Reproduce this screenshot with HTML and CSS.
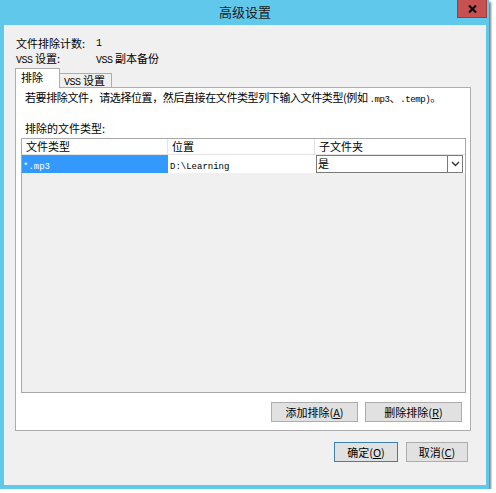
FILE: index.html
```html
<!DOCTYPE html>
<html lang="zh-CN">
<head>
<meta charset="utf-8">
<title>高级设置</title>
<link rel="stylesheet" href="styles.css">
</head>
<body>
<div class="window">
  <div class="titlebar">
    <span class="title">高级设置</span>
    <div class="close">
      <svg width="9" height="8" viewBox="0 0 9 8"><path d="M1 0.5 L8 7.5 M8 0.5 L1 7.5" stroke="#111" stroke-width="2.2" fill="none"/></svg>
    </div>
  </div>
  <div class="client">
    <div class="info">
      <div class="info-row"><span class="label">文件排除计数:</span><span class="mono lg">1</span></div>
      <div class="info-row"><span class="label"><span class="mono lg">VSS</span> 设置:</span><span><span class="mono lg">VSS</span> 副本备份</span></div>
    </div>
    <div class="tabs">
      <div class="tab active">排除</div>
      <div class="tab"><span class="mono lg">VSS</span> 设置</div>
    </div>
    <div class="panel">
      <p class="desc">若要排除文件，请选择位置，然后直接在文件类型列下输入文件类型(例如 <span class="mono">.mp3</span>、<span class="mono">.temp)</span>。</p>
      <p class="list-label">排除的文件类型:</p>
      <div class="grid">
        <div class="grid-head">
          <div class="hcell c1">文件类型</div>
          <div class="hcell c2">位置</div>
          <div class="hcell c3">子文件夹</div>
        </div>
        <div class="grid-row">
          <div class="cell c1 selected"><span class="mono">*.mp3</span></div>
          <div class="cell c2"><span class="mono">D:\Learning</span></div>
          <div class="cell c3">
            <div class="combo">
              <span class="combo-text">是</span>
              <span class="combo-arrow">
                <svg width="9" height="6" viewBox="0 0 9 6"><path d="M1 1 L4.5 4.5 L8 1" stroke="#333" stroke-width="1.4" fill="none"/></svg>
              </span>
            </div>
          </div>
        </div>
      </div>
      <div class="panel-buttons">
        <div class="btn w-add">添加排除(<u>A</u>)</div>
        <div class="btn w-del">删除排除(<u>R</u>)</div>
      </div>
    </div>
    <div class="dialog-buttons">
      <div class="btn default w-ok">确定(<u>O</u>)</div>
      <div class="btn w-cancel">取消(<u>C</u>)</div>
    </div>
  </div>
</div>
</body>
</html>
```
FILE: styles.css
```css
* { box-sizing: border-box; }
body {
  margin: 0;
  background: #ffffff;
  font-family: "Noto Sans CJK SC", "Noto Sans", sans-serif;
  font-size: 11px;
  color: #000;
}
p { margin: 0; }
.mono { font-family: "Liberation Mono", "DejaVu Sans Mono", monospace; font-size: 9px; }
.mono.lg { font-size: 10px; letter-spacing: -0.5px; }
.window {
  width: 489px;
  height: 489px;
  background: #60c8eb;
  padding: 0 3px 4px 4px;
  box-shadow: 2px 2px 2px rgba(0,0,0,0.5);
}
.titlebar {
  position: relative;
  height: 25px;
  display: flex;
  align-items: center;
  justify-content: center;
}
.title {
  font-size: 13px;
  color: #1a1a1a;
  line-height: 16px;
  margin-top: -1px;
}
.close {
  position: absolute;
  top: 0;
  right: -1px;
  width: 30px;
  height: 18px;
  background: #c75050;
  border: 1px solid #9c3c3c;
  border-top: none;
  display: flex;
  align-items: center;
  justify-content: center;
}
.client {
  height: 460px;
  background: #f0f0f0;
  padding: 11px 0 0 11px;
}
.info { margin-left: 1px; }
.info-row {
  display: flex;
  height: 15px;
  line-height: 15px;
}
.label { width: 80px; }
.tabs {
  display: flex;
  align-items: flex-end;
  height: 19px;
  margin-top: 2px;
  position: relative;
  z-index: 1;
}
.tab {
  border: 1px solid #adadad;
  border-bottom: none;
  line-height: 13px;
  padding-left: 5px;
}
.tab.active {
  width: 45px;
  height: 20px;
  background: #ffffff;
  margin-bottom: -1px;
  padding-top: 2px;
}
.tab:not(.active) {
  width: 53px;
  height: 14px;
  background: #f0f0f0;
  margin-left: -1px;
  padding-left: 4px;
}
.panel {
  width: 456px;
  height: 344px;
  background: #ffffff;
  border: 1px solid #adadad;
  padding: 2px 4px 0 5px;
}
.desc { line-height: 15px; margin-left: 4px; letter-spacing: -0.4px; }
.list-label { line-height: 15px; margin-left: 4px; margin-top: 13px; }
.grid {
  margin-top: 2px;
  width: 445px;
  height: 255px;
  border: 1px solid #a8a8a8;
  background: #f0f0f0;
}
.grid-head {
  display: flex;
  height: 16px;
  background: #ffffff;
  border-bottom: 1px solid #e3e3e3;
}
.hcell {
  line-height: 14px;
  padding-left: 4px;
  border-right: 1px solid #e3e3e3;
}
.c1 { width: 146px; }
.c2 { width: 147px; }
.c3 { width: 150px; border-right: none; }
.grid-row {
  display: flex;
  height: 18px;
  background: #ffffff;
}
.cell {
  line-height: 18px;
  padding-left: 2px;
}
.cell.selected {
  background: #3399ff;
  color: #ffffff;
  padding-left: 1px;
}
.cell.c3 { padding: 0 2px 0 1px; }
.combo {
  height: 18px;
  width: 147px;
  border: 1px solid #7a7a7a;
  background: #ffffff;
  display: flex;
  align-items: stretch;
}
.combo-text { flex: 1; line-height: 15px; padding-left: 1px; }
.combo-arrow {
  width: 15px;
  border-left: 1px solid #7a7a7a;
  display: flex;
  align-items: center;
  justify-content: center;
}
.panel-buttons {
  display: flex;
  justify-content: flex-end;
  gap: 7px;
  margin-top: 9px;
  padding-right: 4px;
}
.btn {
  height: 20px;
  line-height: 18px;
  background: #e1e1e1;
  border: 1px solid #adadad;
  text-align: center;
}
.btn u { text-underline-offset: 1px; }
.btn.default { border-color: #3c7fb1; }
.w-add { width: 87px; }
.w-del { width: 97px; }
.w-ok { width: 64px; }
.w-cancel { width: 62px; }
.dialog-buttons {
  display: flex;
  justify-content: flex-end;
  gap: 8px;
  margin-top: 11px;
  padding-right: 18px;
}
```
